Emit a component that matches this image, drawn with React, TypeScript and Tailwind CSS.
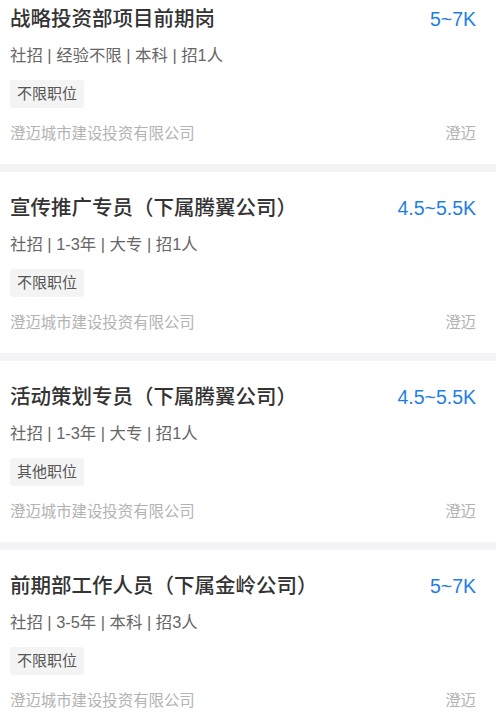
import React from "react";

type Job = {
  title: string;
  salary: string;
  meta: string;
  tag: string;
  company: string;
  city: string;
};

const jobs: Job[] = [
  { title: "战略投资部项目前期岗", salary: "5~7K", meta: "社招 | 经验不限 | 本科 | 招1人", tag: "不限职位", company: "澄迈城市建设投资有限公司", city: "澄迈" },
  { title: "宣传推广专员（下属腾翼公司）", salary: "4.5~5.5K", meta: "社招 | 1-3年 | 大专 | 招1人", tag: "不限职位", company: "澄迈城市建设投资有限公司", city: "澄迈" },
  { title: "活动策划专员（下属腾翼公司）", salary: "4.5~5.5K", meta: "社招 | 1-3年 | 大专 | 招1人", tag: "其他职位", company: "澄迈城市建设投资有限公司", city: "澄迈" },
  { title: "前期部工作人员（下属金岭公司）", salary: "5~7K", meta: "社招 | 3-5年 | 本科 | 招3人", tag: "不限职位", company: "澄迈城市建设投资有限公司", city: "澄迈" },
];

const font = { fontFamily: '"Liberation Sans", "Noto Sans CJK SC", sans-serif' };

function Card({ job }: { job: Job }) {
  return (
    <div className="bg-white pl-[10px] pr-[20px] pt-[22px] pb-[19px]">
      <div className="flex items-center justify-between h-[28px]">
        <div className="text-[20.5px] leading-[28px] font-medium text-[#333333]">{job.title}</div>
        <div className="text-[19.5px] leading-[28px] text-[#1f7ee6]">{job.salary}</div>
      </div>
      <div className="mt-[11px] text-[16.4px] leading-[22px] text-[#666666]">{job.meta}</div>
      <div className="mt-[14px] flex">
        <div className="h-[28px] px-[7px] rounded-[3px] bg-[#f4f4f4] text-[15px] leading-[28px] text-[#555555]">
          {job.tag}
        </div>
      </div>
      <div className="mt-[15px] flex items-center justify-between text-[15.4px] leading-[22px] text-[#b3b3b3]">
        <span>{job.company}</span>
        <span>{job.city}</span>
      </div>
    </div>
  );
}

export default function App() {
  return (
    <div className="w-[496px] h-[717px] overflow-hidden bg-[#f4f4f6]" style={font}>
      <div className="-mt-[17px] flex flex-col gap-[8px]">
        {jobs.map((j, i) => (
          <Card key={i} job={j} />
        ))}
      </div>
    </div>
  );
}
